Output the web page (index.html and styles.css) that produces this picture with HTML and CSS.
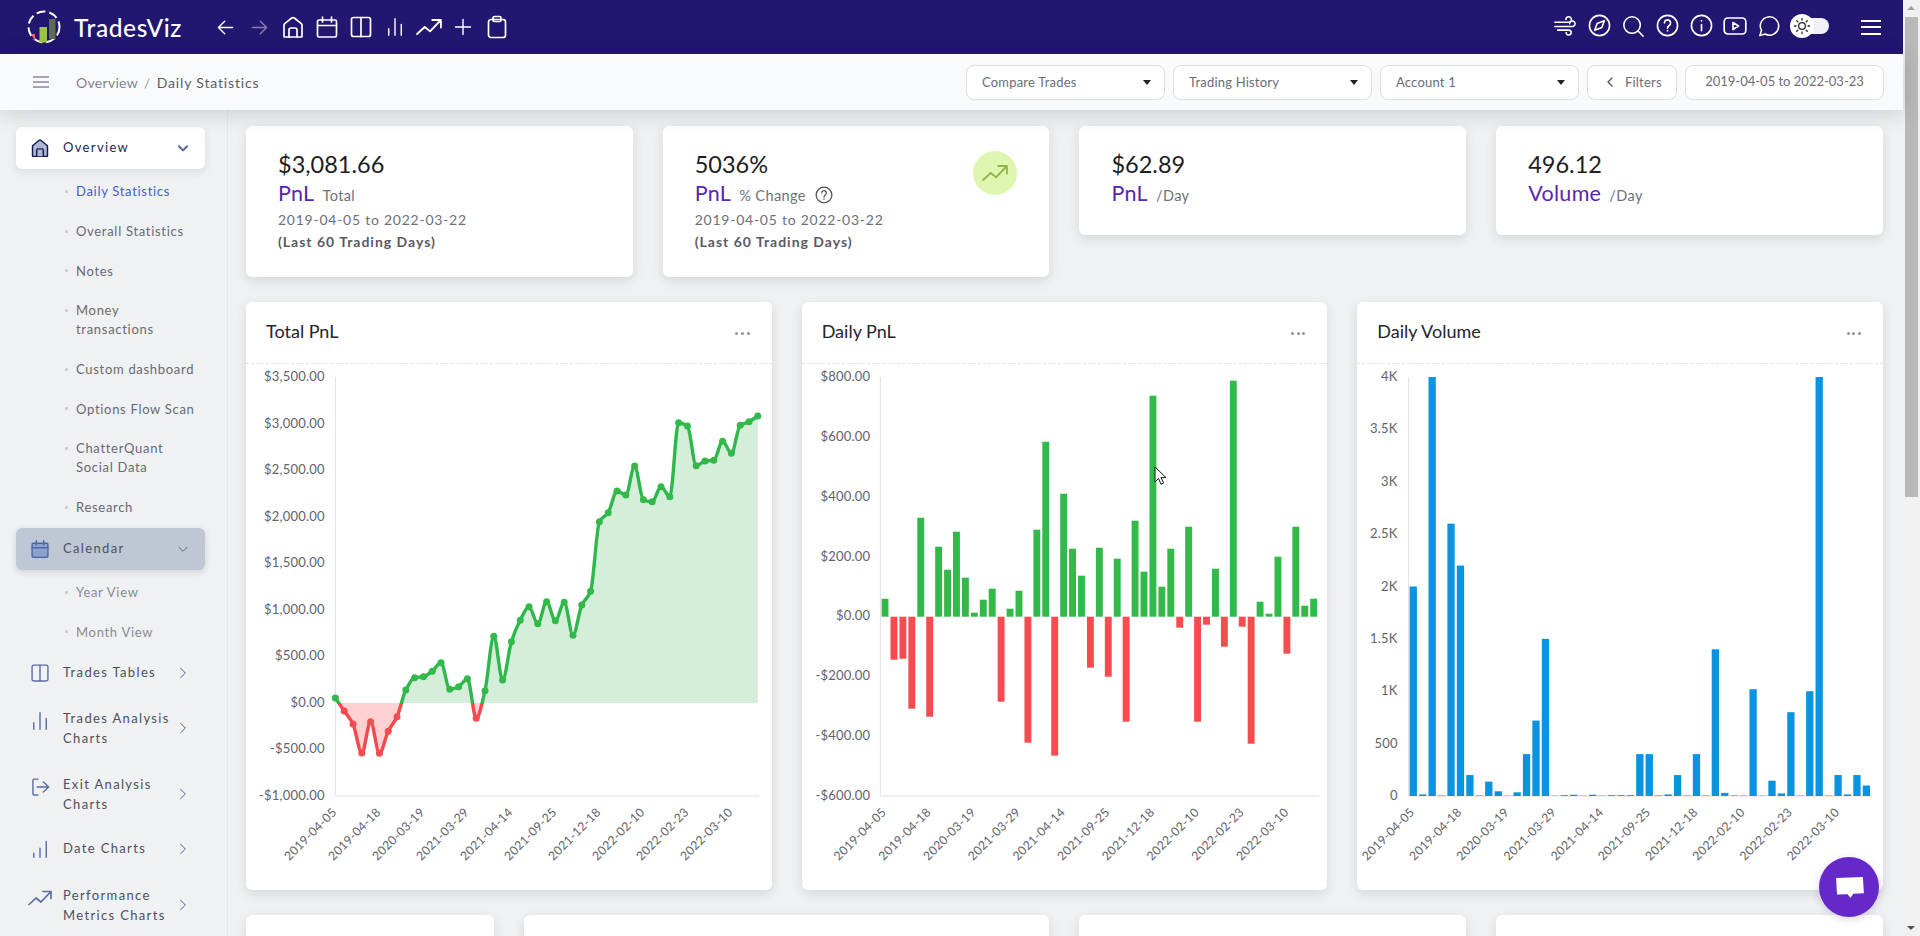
FILE: index.html
```html
<!DOCTYPE html>
<html lang="en">
<head>
<meta charset="utf-8">
<title>TradesViz - Daily Statistics</title>
<link rel="stylesheet" href="styles.css">
</head>
<body>
<svg class="defs" aria-hidden="true">
  <symbol id="i-left" viewBox="0 0 24 24"><path d="M21 12H3M11 4l-8 8 8 8"/></symbol>
  <symbol id="i-right" viewBox="0 0 24 24"><path d="M3 12h18M13 4l8 8-8 8"/></symbol>
  <symbol id="i-home" viewBox="0 0 24 24"><path d="M3 21.500V10.200c0-.6.3-1.100.7-1.500l7-5.700c.8-.6 1.800-.6 2.600 0l7 5.700c.4.4.7.9.7 1.500v11.300c0 .3-.2.5-.5.5h-17c-.3 0-.5-.2-.5-.5Z"/><path d="M8 22v-7a2 2 0 0 1 2-2h4a2 2 0 0 1 2 2v7"/></symbol>
  <symbol id="i-cal" viewBox="0 0 24 24"><rect x="2.500" y="5" width="19" height="17" rx="1.500"/><path d="M2.500 10.500h19M7.500 2v5M16.500 2v5"/></symbol>
  <symbol id="i-cols" viewBox="0 0 24 24"><rect x="2.500" y="2.500" width="19" height="19" rx="2"/><path d="M12 2.500v19"/></symbol>
  <symbol id="i-bars" viewBox="0 0 24 24"><path d="M4.500 14v8M12 2v20M19.500 9v13"/></symbol>
  <symbol id="i-bars-up" viewBox="0 0 24 24"><path d="M4.500 17v5M12 11v11M19.500 3v19"/></symbol>
  <symbol id="i-trend" viewBox="0 0 24 24"><path d="M1 18.500l7-6.500 5 4L22.500 6M15 5.500h8v7"/></symbol>
  <symbol id="i-plus" viewBox="0 0 24 24"><path d="M12 3v18M3 12h18"/></symbol>
  <symbol id="i-clip" viewBox="0 0 24 24"><rect x="3.500" y="4.500" width="17" height="18" rx="2.500"/><rect x="8" y="1.500" width="8" height="5" rx="1.500"/></symbol>
  <symbol id="i-wind" viewBox="0 0 24 24"><path d="M1 8h15a3 3 0 1 0-3-3M1 12.500h19a3 3 0 1 0-3-3M4 16.500h12a2.700 2.700 0 1 1-2.700 2.700"/></symbol>
  <symbol id="i-compass" viewBox="0 0 24 24"><circle cx="12" cy="12" r="10.500"/><path d="M17 7l-2.500 7L7 17l2.500-7Z"/></symbol>
  <symbol id="i-search" viewBox="0 0 24 24"><circle cx="11" cy="11" r="9"/><path d="M17.500 17.500L23 23"/></symbol>
  <symbol id="i-help" viewBox="0 0 24 24"><circle cx="12" cy="12" r="10.500"/><path d="M8.800 9.300a3.200 3.200 0 1 1 5 2.700c-1.100.8-1.800 1.300-1.800 2.800M12 17.300v.4"/></symbol>
  <symbol id="i-info" viewBox="0 0 24 24"><circle cx="12" cy="12" r="10.500"/><path d="M12 11v6.500M12 6.800v.4"/></symbol>
  <symbol id="i-video" viewBox="0 0 24 24"><rect x="1.200" y="4" width="21.600" height="16" rx="3.500"/><path d="M10 8.500l5.500 3.500-5.500 3.500Z"/></symbol>
  <symbol id="i-chat" viewBox="0 0 24 24"><path d="M2 22.500l1.800-5.700A10 10 0 1 1 7.700 20.700Z"/></symbol>
  <symbol id="i-sun" viewBox="0 0 24 24"><circle cx="12" cy="12" r="4.500"/><path d="M12 2v2M12 20v2M2 12h2M20 12h2M5 5l1.400 1.400M17.600 17.600L19 19M5 19l1.400-1.400M17.600 6.400L19 5"/></symbol>
  <symbol id="i-exit" viewBox="0 0 24 24"><path d="M9.500 2.500H5A1.500 1.500 0 0 0 3.500 4v16A1.500 1.500 0 0 0 5 21.500h4.500M8.500 12h14M16 6l6.500 6-6.500 6"/></symbol>
  <symbol id="i-down" viewBox="0 0 24 24"><path d="M5 9l7 7 7-7"/></symbol>
  <symbol id="i-next" viewBox="0 0 24 24"><path d="M8 4l8 8-8 8"/></symbol>
  <symbol id="i-prev" viewBox="0 0 24 24"><path d="M16 4l-8 8 8 8"/></symbol>
</svg>

<div class="page">
  <header class="nav">
    <svg class="logo" viewBox="0 0 34 34" aria-hidden="true">
      <circle class="logo-ring" cx="17" cy="17" r="15.500"/>
      <path class="logo-red" d="M4 24h4v7Z"/>
      <rect class="logo-green" x="12.500" y="17" width="7.500" height="15.500"/>
      <rect class="logo-grey" x="22" y="9" width="6.500" height="20"/>
    </svg>
    <div class="brand">TradesViz</div>
    <div class="nav-group">
      <span class="nav-btn"><svg class="ico ico-19"><use href="#i-left"/></svg></span>
      <span class="nav-btn is-dim"><svg class="ico ico-19"><use href="#i-right"/></svg></span>
      <span class="nav-btn"><svg class="ico ico-24"><use href="#i-home"/></svg></span>
      <span class="nav-btn"><svg class="ico ico-24"><use href="#i-cal"/></svg></span>
      <span class="nav-btn"><svg class="ico ico-24"><use href="#i-cols"/></svg></span>
      <span class="nav-btn"><svg class="ico ico-20"><use href="#i-bars"/></svg></span>
      <span class="nav-btn"><svg class="ico ico-26"><use href="#i-trend"/></svg></span>
      <span class="nav-btn"><svg class="ico ico-20"><use href="#i-plus"/></svg></span>
      <span class="nav-btn"><svg class="ico ico-24"><use href="#i-clip"/></svg></span>
    </div>
    <div class="nav-group nav-group-right">
      <span class="nav-btn"><svg class="ico ico-22"><use href="#i-wind"/></svg></span>
      <span class="nav-btn"><svg class="ico ico-23"><use href="#i-compass"/></svg></span>
      <span class="nav-btn"><svg class="ico ico-22"><use href="#i-search"/></svg></span>
      <span class="nav-btn"><svg class="ico ico-23"><use href="#i-help"/></svg></span>
      <span class="nav-btn"><svg class="ico ico-23"><use href="#i-info"/></svg></span>
      <span class="nav-btn"><svg class="ico ico-24"><use href="#i-video"/></svg></span>
      <span class="nav-btn"><svg class="ico ico-22"><use href="#i-chat"/></svg></span>
      <span class="toggle"><span class="toggle-knob"><svg class="ico ico-18 ico-dark"><use href="#i-sun"/></svg></span></span>
    </div>
    <div class="burger burger-light"><i></i><i></i><i></i></div>
  </header>

  <div class="subbar">
    <div class="burger burger-muted"><i></i><i></i><i></i></div>
    <div class="crumbs"><span class="crumb-root">Overview</span><span class="crumb-sep">/</span><span class="crumb-here">Daily Statistics</span></div>
    <div class="tools">
      <div class="select">Compare Trades<b class="caret"></b></div>
      <div class="select">Trading History<b class="caret"></b></div>
      <div class="select">Account 1<b class="caret"></b></div>
      <div class="filter-btn"><svg class="ico ico-12 ico-chev"><use href="#i-prev"/></svg><span>Filters</span></div>
      <div class="date-btn">2019-04-05 to 2022-03-23</div>
    </div>
  </div>

  <div class="layout">
    <aside class="side">
      <div class="side-head is-open"><svg class="ico duo-dark"><use href="#i-home"/></svg><span class="side-label">Overview</span><svg class="ico ico-14 ico-bold"><use href="#i-down"/></svg></div>
      <ul class="sub">
        <li class="is-active">Daily Statistics</li>
        <li>Overall Statistics</li>
        <li>Notes</li>
        <li>Money<br>transactions</li>
        <li>Custom dashboard</li>
        <li>Options Flow Scan</li>
        <li>ChatterQuant<br>Social Data</li>
        <li>Research</li>
      </ul>
      <div class="side-head is-hover"><svg class="ico duo-blue"><use href="#i-cal"/></svg><span class="side-label">Calendar</span><svg class="ico ico-14"><use href="#i-down"/></svg></div>
      <ul class="sub sub-faded">
        <li>Year View</li>
        <li>Month View</li>
      </ul>
      <div class="side-head"><svg class="ico"><use href="#i-cols"/></svg><span class="side-label">Trades Tables</span><svg class="ico ico-14"><use href="#i-next"/></svg></div>
      <div class="side-head is-tall"><svg class="ico up-6"><use href="#i-bars"/></svg><span class="side-label">Trades Analysis<br>Charts</span><svg class="ico ico-14"><use href="#i-next"/></svg></div>
      <div class="side-head is-tall"><svg class="ico up-6"><use href="#i-exit"/></svg><span class="side-label">Exit Analysis<br>Charts</span><svg class="ico ico-14"><use href="#i-next"/></svg></div>
      <div class="side-head"><svg class="ico"><use href="#i-bars-up"/></svg><span class="side-label">Date Charts</span><svg class="ico ico-14"><use href="#i-next"/></svg></div>
      <div class="side-head is-tall"><svg class="ico up-6 side-trend"><use href="#i-trend"/></svg><span class="side-label">Performance<br>Metrics Charts</span><svg class="ico ico-14"><use href="#i-next"/></svg></div>
    </aside>

    <main class="main">
      <div class="grid">
        <section class="card stat span-3">
          <div class="stat-val">$3,081.66</div>
          <div class="stat-name"><span class="stat-key">PnL</span><span class="stat-sub">Total</span></div>
          <div class="stat-date">2019-04-05 to 2022-03-22</div>
          <div class="stat-note">(Last 60 Trading Days)</div>
        </section>
        <section class="card stat span-3">
          <div class="stat-val">5036%</div>
          <div class="stat-name"><span class="stat-key">PnL</span><span class="stat-sub">% Change</span><svg class="ico ico-18 stat-help"><use href="#i-help"/></svg></div>
          <div class="stat-date">2019-04-05 to 2022-03-22</div>
          <div class="stat-note">(Last 60 Trading Days)</div>
          <span class="stat-badge"><svg class="ico ico-26"><use href="#i-trend"/></svg></span>
        </section>
        <section class="card stat stat-short span-3">
          <div class="stat-val">$62.89</div>
          <div class="stat-name"><span class="stat-key">PnL</span><span class="stat-sub">/Day</span></div>
        </section>
        <section class="card stat stat-short span-3">
          <div class="stat-val">496.12</div>
          <div class="stat-name"><span class="stat-key">Volume</span><span class="stat-sub">/Day</span></div>
        </section>

        <section class="card span-4">
          <div class="card-head"><h2>Total PnL</h2><span class="dots"><i></i><i></i><i></i></span></div>
          <svg class="chart" id="chart-total"></svg>
        </section>
        <section class="card span-4">
          <div class="card-head"><h2>Daily PnL</h2><span class="dots"><i></i><i></i><i></i></span></div>
          <svg class="chart" id="chart-daily"></svg>
        </section>
        <section class="card span-4">
          <div class="card-head"><h2>Daily Volume</h2><span class="dots"><i></i><i></i><i></i></span></div>
          <svg class="chart" id="chart-volume"></svg>
        </section>

        <section class="card card-next span-2"></section>
        <section class="card card-next span-4"></section>
        <section class="card card-next span-3"></section>
        <section class="card card-next span-3"></section>
      </div>
    </main>
  </div>
</div>

<div class="scrollbar"><b class="sb-up"></b><span class="sb-thumb"></span><b class="sb-down"></b></div>

<svg class="cursor" viewBox="0 0 12 19" aria-hidden="true"><path d="M1 1v15l3.500-3.400 2.500 5.600 2.600-1.100-2.500-5.500H12Z"/></svg>
<div class="chat-fab"><svg viewBox="0 0 30 24" aria-hidden="true"><path d="M1 2l28-1 1 17-11 .6-3 4.400-3-4-11 .4Z"/></svg></div>

<script src="charts.js"></script>
</body>
</html>
```
FILE: styles.css
```css
* { box-sizing: border-box; }
html, body { margin: 0; height: 936px; overflow: hidden; }
body {
  display: flex;
  font-family: "Lato", "Noto Sans", sans-serif;
  color: #555;
  background: #eff1f2;
}
.defs { position: absolute; width: 0; height: 0; }
.page { flex: 1; min-width: 0; display: flex; flex-direction: column; height: 936px; }

/* icons */
.ico { fill: none; stroke: currentColor; stroke-width: 1.7; stroke-linecap: round; stroke-linejoin: round; flex: none; display: block; width: 20px; height: 20px; }
.ico-12 { width: 12px; height: 12px; }
.ico-14 { width: 14px; height: 14px; }
.ico-18 { width: 18px; height: 18px; }
.ico-19 { width: 19px; height: 19px; }
.ico-20 { width: 20px; height: 20px; }
.ico-22 { width: 22px; height: 22px; }
.ico-23 { width: 23px; height: 23px; }
.ico-24 { width: 24px; height: 24px; }
.ico-26 { width: 26px; height: 26px; }
.ico-dark { color: #222; }
.ico-bold { stroke-width: 3.400; color: #1f1a5c; }
.ico-chev { color: #55555f; stroke-width: 2.800; }

/* top bar */
.nav { height: 54px; flex: none; background: #211670; color: #fff; display: flex; align-items: center; padding: 0 22px 0 27px; }
.logo { width: 34px; height: 34px; flex: none; }
.logo-ring { fill: none; stroke: #fff; stroke-width: 2; stroke-dasharray: 9 4; }
.logo-red { fill: #e8696b; }
.logo-green { fill: #9cc63f; }
.logo-grey { fill: #5d6a55; }
.brand { width: 134px; margin-left: 13px; flex: none; font-size: 24.500px; font-weight: 500; letter-spacing: .6px; }
.nav-group { display: flex; align-items: center; }
.nav-group-right { margin-left: auto; padding-bottom: 3px; }
.nav-btn { width: 34px; height: 34px; display: flex; align-items: center; justify-content: center; }
.is-dim { opacity: .45; }
.toggle { width: 38px; height: 16px; margin-left: 5px; background: #f2f2f6; border-radius: 8px; position: relative; }
.toggle-knob { position: absolute; left: -1px; top: -4px; width: 24px; height: 24px; border-radius: 50%; background: #fff; display: flex; align-items: center; justify-content: center; }
.burger { display: flex; flex-direction: column; justify-content: space-between; flex: none; }
.burger i { display: block; height: 2px; background: currentColor; }
.burger-light { width: 20px; height: 15px; margin-left: 32px; color: #fff; }
.burger-muted { width: 16px; height: 12px; color: #a5a3ba; }

/* sub bar */
.subbar { height: 56px; flex: none; background: #f9fafb; display: flex; align-items: center; padding: 0 19px 0 33px; box-shadow: 0 3px 22px rgba(30, 35, 60, .18); position: relative; z-index: 2; }
.crumbs { margin-left: 27px; font-size: 14px; letter-spacing: .3px; display: flex; }
.crumb-root { color: #85858f; }
.crumb-sep { color: #9a9aa4; margin: 0 6px; }
.crumb-here { color: #5c5c68; letter-spacing: .85px; }
.tools { margin-left: auto; display: flex; gap: 8px; font-size: 13px; color: #6c6c7a; letter-spacing: .2px; }
.select, .filter-btn, .date-btn { height: 35px; background: #fff; border: 1px solid #dddee4; border-radius: 8px; display: flex; align-items: center; }
.select { width: 199px; padding: 0 13px 0 15px; justify-content: space-between; }
.caret { width: 0; height: 0; border: 4px solid transparent; border-top: 5px solid #222; border-bottom: 0; }
.filter-btn { width: 90px; padding-left: 16px; gap: 9px; }
.date-btn { width: 199px; justify-content: center; letter-spacing: 0; padding-bottom: 2px; }

/* layout */
.layout { flex: 1; min-height: 0; display: flex; }
.side { width: 228px; flex: none; padding: 17px 22px 0 16px; border-right: 1px solid #e4e6ea; background: #eff1f2; overflow: hidden; }
.side-head { height: 42px; display: flex; align-items: center; padding: 0 15px 0 14px; border-radius: 6px; color: #5a6da6; margin-bottom: 3.500px; }
.side-head.is-tall { height: 62px; }
.up-6 { margin-top: -14px; }
.side-trend { width: 24px; height: 24px; margin-left: -2px; margin-right: -2px; }
.side-head > .ico:last-child { color: #58638f; }
.side-label { flex: 1; margin-left: 13px; font-size: 13px; line-height: 20px; letter-spacing: 1.350px; color: #4f4f5c; padding-bottom: 2px; }
.is-tall .side-label { padding-bottom: 0; }
.is-open { background: #fff; box-shadow: 0 3px 8px rgba(30, 35, 60, .1); margin-bottom: 3px; }
.is-open .side-label { color: #262450; }
.duo-dark { color: #151650; fill: #aeb6d4; }
.is-hover { background: #bfc7d4; box-shadow: 0 2px 6px rgba(30, 35, 60, .15); margin-bottom: 3px; }
.duo-blue { color: #4c66a9; fill: #8ea1cd; }
.sub { list-style: none; margin: 0; padding: 0 0 0 60px; font-size: 13px; line-height: 19px; letter-spacing: .7px; color: #696973; }
.sub li { padding: 10.350px 0; position: relative; }
.sub li::before { content: ""; position: absolute; left: -11px; top: 18px; width: 3px; height: 3px; border-radius: 50%; background: #c6c8cf; }
.sub .is-active { color: #4361c8; }
.sub-faded { color: #8a8a93; }

/* content */
.main { flex: 1; min-width: 0; padding: 16px 20px 0 18px; overflow: hidden; }
.grid { display: grid; grid-template-columns: repeat(12, 1fr); column-gap: 30px; row-gap: 25px; align-items: start; }
.span-2 { grid-column: span 2; }
.span-3 { grid-column: span 3; }
.span-4 { grid-column: span 4; }
.card { background: #fff; border-radius: 6px; box-shadow: 0 4px 12px rgba(30, 35, 60, .12); }
.card-next { height: 200px; }

.stat { position: relative; padding: 23px 32px 25px; }
.stat-short { padding-bottom: 29px; }
.stat-val { font-size: 23.500px; line-height: 30px; color: #1d1d24; }
.stat-name { margin-top: 1px; height: 26px; line-height: 26px; display: flex; align-items: baseline; }
.stat-key { font-size: 21.500px; color: #5528ae; letter-spacing: .3px; }
.stat-sub { font-size: 14.500px; color: #70707c; margin-left: 8px; letter-spacing: .4px; }
.stat-help { margin-left: 9px; align-self: center; margin-top: 3px; color: #555; }
.stat-date { font-size: 14px; line-height: 22px; color: #6f6f7a; letter-spacing: .75px; margin-top: 3px; }
.stat-note { font-size: 14px; line-height: 21px; font-weight: 700; color: #5a5a64; letter-spacing: 1px; }
.stat-badge { position: absolute; right: 32px; top: 25px; width: 44px; height: 44px; border-radius: 50%; background: #dff6b0; color: #8fb548; display: flex; align-items: center; justify-content: center; }

.card-head { height: 62px; border-bottom: 1px dashed #e2e3e6; display: flex; align-items: center; justify-content: space-between; padding: 0 22px 4px 20px; }
.card-head h2 { margin: 0; font-size: 18px; font-weight: 400; color: #24242c; }
.dots { display: flex; gap: 2.600px; padding-top: 5px; }
.dots i { width: 3px; height: 3px; border-radius: 50%; background: #90909a; }
.chart { display: block; width: 100%; height: 526px; }
.axis { stroke: #dfe0e4; stroke-width: 1; }
.tick { font-size: 13px; fill: #62626c; letter-spacing: .2px; }
.tick-y { text-anchor: end; dominant-baseline: central; }
.tick-x { text-anchor: end; font-size: 12.200px; letter-spacing: .25px; }
.line { fill: none; stroke-width: 3.400; stroke-linejoin: round; }
.pos-line { stroke: #2db84b; }
.neg-line { stroke: #f5474c; }
.pos-area { fill: #d5eeda; }
.neg-area { fill: #ffd1d2; }
.pos-fill { fill: #33b84a; }
.neg-fill { fill: #f64c50; }
.vol-fill { fill: #0a94df; }

/* scrollbar */
.scrollbar { width: 17px; flex: none; height: 936px; background: #f1f1f1; position: relative; }
.sb-thumb { position: absolute; left: 2px; right: 0; top: 17px; width: 13px; height: 480px; background: #b9b9b9; }
.sb-up, .sb-down { position: absolute; left: 4px; width: 0; height: 0; border: 4px solid transparent; border-bottom-width: 0; border-top-width: 0; }
.sb-up { top: 6px; border-bottom: 4px solid #9e9e9e; }
.sb-down { bottom: 6px; border-top: 4px solid #505050; }

/* overlays */
.cursor { position: absolute; left: 1154px; top: 466px; width: 12px; height: 19px; z-index: 5; fill: #fff; stroke: #111; stroke-width: 1; }
.chat-fab { position: absolute; left: 1819px; top: 857px; width: 60px; height: 60px; border-radius: 50%; background: #6529c9; display: flex; align-items: center; justify-content: center; z-index: 6; box-shadow: 0 2px 8px rgba(60, 30, 140, .2); }
.chat-fab svg { width: 29px; height: 23px; fill: #fff; }
```
FILE: charts.js
```js
var NS = 'http://www.w3.org/2000/svg';
var TOP = 364, LEFT = { total: 246, daily: 801.67, volume: 1357.33 };
var DATES = ['2019-04-05','2019-04-18','2020-03-19','2021-03-29','2021-04-14','2021-09-25','2021-12-18','2022-02-10','2022-02-23','2022-03-10'];

function el(svg, name, attrs, text) {
  var n = document.createElementNS(NS, name);
  for (var k in attrs) n.setAttribute(k, attrs[k]);
  if (text !== undefined) n.textContent = text;
  svg.appendChild(n);
  return n;
}

function frame(svg, left, x0, x1, labelX, yLabels, ticks) {
  var y0 = 377 - TOP, y1 = 796 - TOP, ax = x0 - left, end = x1 - left;
  el(svg, 'line', { x1: ax, x2: ax, y1: y0, y2: y1, 'class': 'axis' });
  el(svg, 'line', { x1: ax, x2: end, y1: y1, y2: y1, 'class': 'axis' });
  yLabels.forEach(function (t, i) {
    el(svg, 'text', { x: labelX - left, y: y0 + i * (y1 - y0) / (yLabels.length - 1) - 1, 'class': 'tick tick-y' }, t);
  });
  DATES.forEach(function (d, i) {
    var x = ticks[0] + i * ticks[1] - left + 2, y = 813 - TOP;
    el(svg, 'text', { x: x, y: y, transform: 'rotate(-45 ' + x + ' ' + y + ')', 'class': 'tick tick-x' }, d);
  });
}

function smooth(p) {
  var n = p.length, m = [], d = '', i, s = [];
  for (i = 0; i < n - 1; i++) s.push((p[i + 1][1] - p[i][1]) / (p[i + 1][0] - p[i][0]));
  m[0] = s[0]; m[n - 1] = s[n - 2];
  for (i = 1; i < n - 1; i++) m[i] = s[i - 1] * s[i] <= 0 ? 0 : 2 * s[i - 1] * s[i] / (s[i - 1] + s[i]);
  d = 'M' + p[0][0] + ' ' + p[0][1];
  for (i = 0; i < n - 1; i++) {
    var h = (p[i + 1][0] - p[i][0]) / 3;
    d += 'C' + (p[i][0] + h) + ' ' + (p[i][1] + m[i] * h) + ' ' + (p[i + 1][0] - h) + ' ' + (p[i + 1][1] - m[i + 1] * h) + ' ' + p[i + 1][0] + ' ' + p[i + 1][1];
  }
  return d;
}

/* Total PnL */
(function () {
  var svg = document.getElementById('chart-total'), left = LEFT.total;
  var ys = [698,711,724,753,721.7,753.3,731.3,716.7,690,677.7,676.7,671.3,662.7,689.3,686.7,678.7,718.3,690.7,636.3,680,641.7,620.3,
    606.7,623.7,601.7,620.7,602.3,635.3,605,591.3,521.7,512.7,491,495,466,499.7,501.7,486.7,496.7,422.7,426,465.7,461,460.3,441.3,453.3,425.3,421.7,416];
  var zero = 703 - TOP;
  var pts = ys.map(function (y, i) { return [335.4 + i * 8.8 - left, y - TOP]; });
  frame(svg, left, 335.4, 759, 324.7,
    ['$3,500.00','$3,000.00','$2,500.00','$2,000.00','$1,500.00','$1,000.00','$500.00','$0.00','-$500.00','-$1,000.00'],
    [335.4, 44]);
  var defs = el(svg, 'defs', {});
  var up = el(defs, 'clipPath', { id: 'clip-up' }), dn = el(defs, 'clipPath', { id: 'clip-dn' });
  el(up, 'rect', { x: 0, y: 0, width: 530, height: zero });
  el(dn, 'rect', { x: 0, y: zero, width: 530, height: 500 });
  var line = smooth(pts), last = pts[pts.length - 1];
  var area = line + 'L' + last[0] + ' ' + zero + 'L' + pts[0][0] + ' ' + zero + 'Z';
  el(svg, 'path', { d: area, 'class': 'pos-area', 'clip-path': 'url(#clip-up)' });
  el(svg, 'path', { d: area, 'class': 'neg-area', 'clip-path': 'url(#clip-dn)' });
  el(svg, 'path', { d: line, 'class': 'line pos-line', 'clip-path': 'url(#clip-up)' });
  el(svg, 'path', { d: line, 'class': 'line neg-line', 'clip-path': 'url(#clip-dn)' });
  pts.forEach(function (p) {
    el(svg, 'circle', { cx: p[0], cy: p[1], r: 3.5, 'class': p[1] > zero ? 'neg-fill' : 'pos-fill' });
  });
})();

/* Daily PnL: bar lengths in pixels, positive up */
(function () {
  var svg = document.getElementById('chart-daily'), left = LEFT.daily;
  var hs = [18,-43,-42,-92,99,-100,70,47,85,39,4,17,28,-85,8,26,-126,87,175,-139,123,68,41,-51,69,-60,58,-105,96,45,221,30,68,-11,90,-105,-8,48,-30,236,-10,-127,15,3,60,-37,90,11,18];
  var zero = 616.7 - TOP;
  frame(svg, left, 880, 1319, 870,
    ['$800.00','$600.00','$400.00','$200.00','$0.00','-$200.00','-$400.00','-$600.00'],
    [884.7, 44.7]);
  hs.forEach(function (h, i) {
    var x = 884.7 + i * 8.93 - 3.45 - left;
    el(svg, 'rect', { x: x, y: h > 0 ? zero - h : zero, width: 6.9, height: Math.abs(h), 'class': h > 0 ? 'pos-fill' : 'neg-fill' });
  });
})();

/* Daily Volume */
(function () {
  var svg = document.getElementById('chart-volume'), left = LEFT.volume;
  var vs = [2000,15,4000,5,2600,2200,200,5,137,45,3,35,400,720,1500,3,8,12,3,12,3,8,8,8,400,400,5,15,200,5,400,5,1400,30,5,4,1020,3,146,25,800,4,1000,4000,4,200,15,200,100];
  var base = 796 - TOP;
  frame(svg, left, 1409, 1872, 1398, ['4K','3.5K','3K','2.5K','2K','1.5K','1K','500','0'], [1413.6, 47.2]);
  vs.forEach(function (v, i) {
    var h = v * 419 / 4000, x = 1413.6 + i * 9.44 - 3.65 - left;
    el(svg, 'rect', { x: x, y: base - h, width: 7.3, height: h, 'class': 'vol-fill' });
  });
})();
```
